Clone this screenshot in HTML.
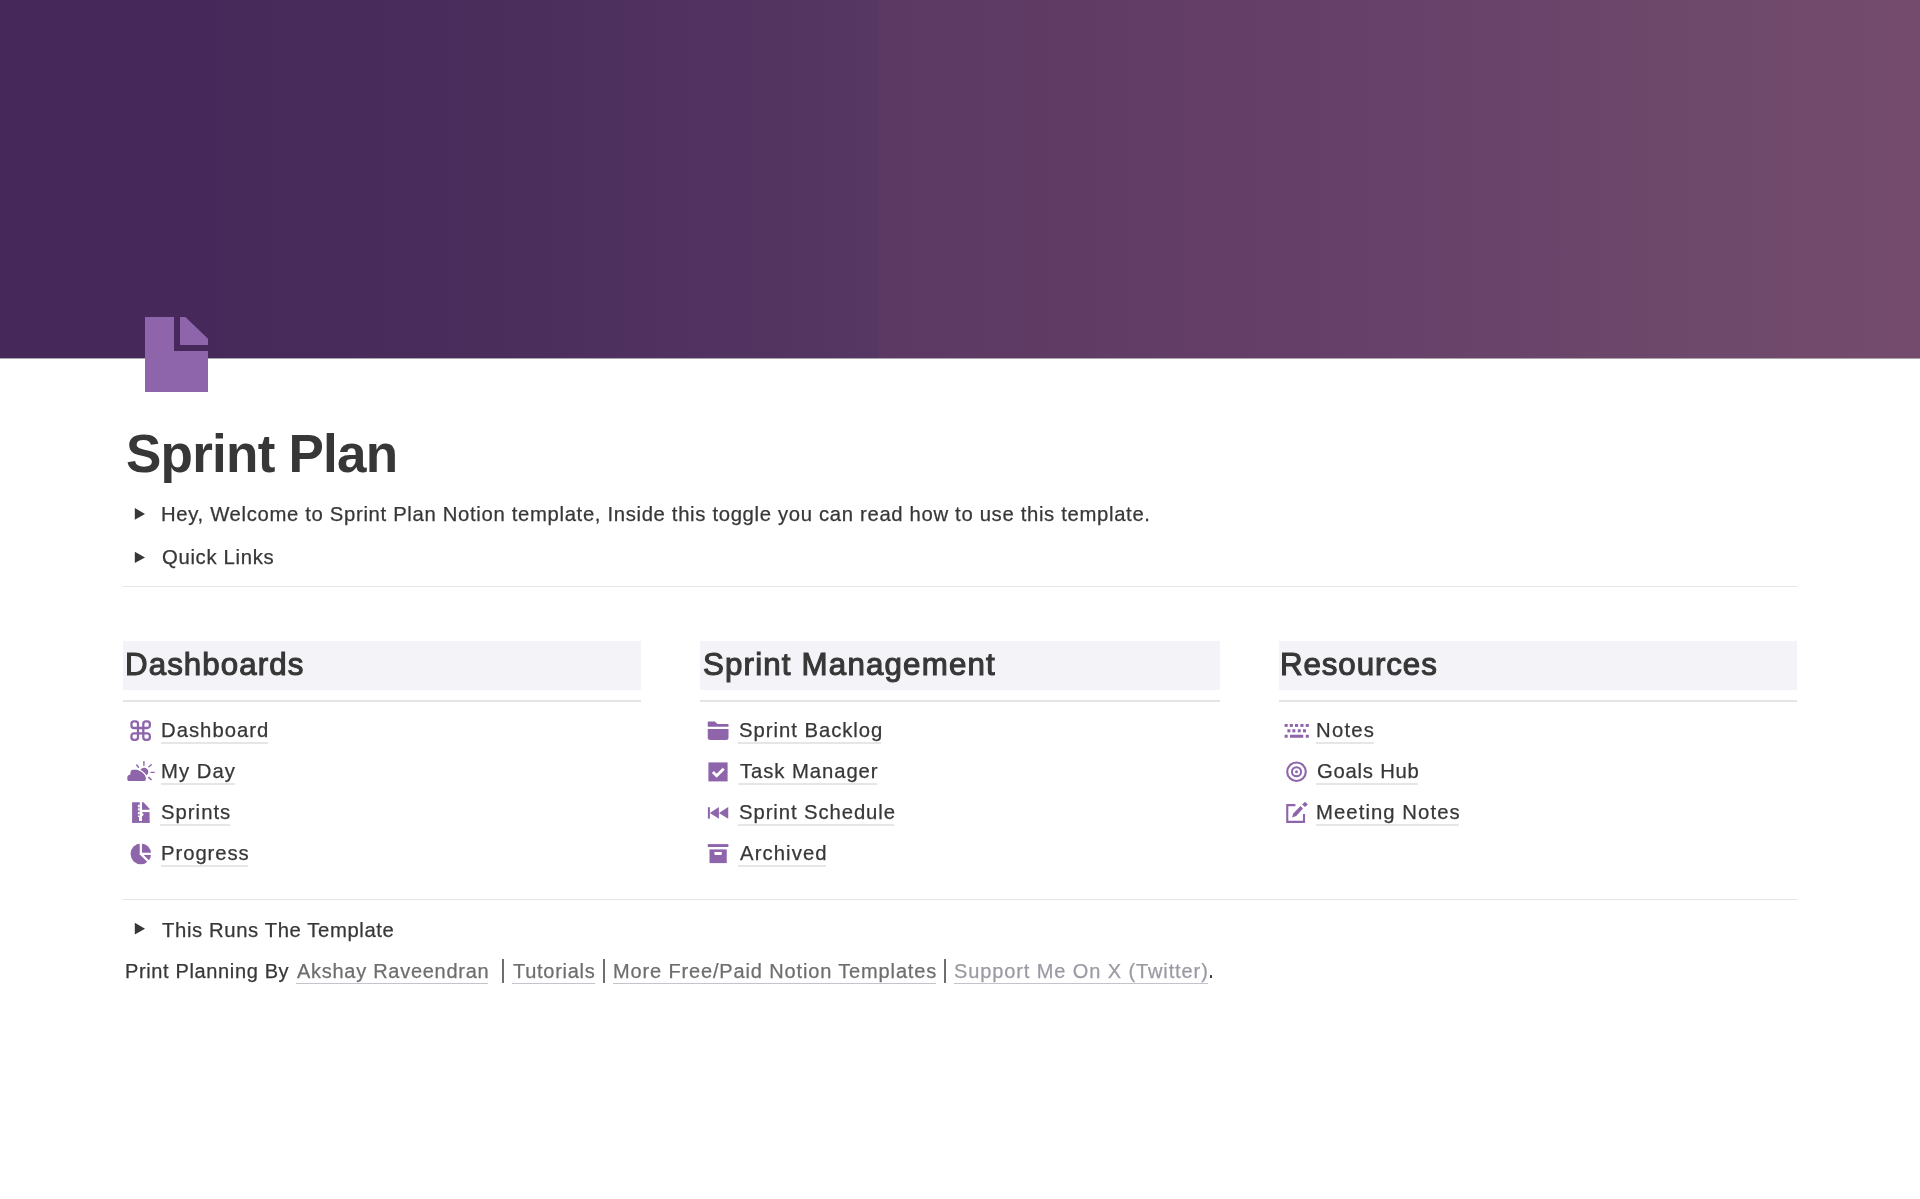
<!DOCTYPE html>
<html><head><meta charset="utf-8"><title>Sprint Plan</title>
<style>
html,body{margin:0;padding:0;background:#fff;}
body{width:1920px;height:1199px;overflow:hidden;position:relative;font-family:"Liberation Sans",sans-serif;}
.t{position:absolute;white-space:pre;line-height:1;will-change:transform;}
.u{position:absolute;}
.banner{position:absolute;left:0;top:0;width:1920px;height:358px;background:linear-gradient(90deg,#46295A 0px,#46295A 190px,#492B5B 354px,#4C2E5D 537px,#513260 704px,#563662 876px,#5B3962 880px,#623D66 1150px,#663F69 1290px,#69436A 1500px,#6E496B 1700px,#744B6D 1920px);}
.hbox{position:absolute;top:641px;height:49px;background:#F4F3F8;}
.div{position:absolute;height:1px;background:#E4E4E4;}
</style></head><body>
<div class="banner"></div>
<div class="u" style="left:0;top:358px;width:1920px;height:1px;background:#A9A6AB"></div>
<div class="div" style="left:123px;top:586px;width:1674px;background:#E6E6E6"></div>
<div class="hbox" style="left:123px;width:518px"></div>
<div class="hbox" style="left:700px;width:520px"></div>
<div class="hbox" style="left:1279px;width:518px"></div>
<div class="div" style="left:123px;top:700px;width:518px;height:1.6px"></div>
<div class="div" style="left:700px;top:700px;width:520px;height:1.6px"></div>
<div class="div" style="left:1279px;top:700px;width:518px;height:1.6px"></div>
<div class="div" style="left:123px;top:898.5px;width:1674px;background:#E6E6E6"></div>
<div class="t" style="left:125.91px;top:427.07px;font-size:53.04px;letter-spacing:-0.780px;font-weight:bold;color:#373737;">Sprint Plan</div><div class="t" style="left:161.28px;top:503.71px;font-size:20.29px;letter-spacing:0.669px;color:#373737;-webkit-text-stroke:0.25px #373737;">Hey, Welcome to Sprint Plan Notion template, Inside this toggle you can read how to use this template.</div><div class="t" style="left:161.69px;top:546.56px;font-size:20.29px;letter-spacing:0.683px;color:#373737;-webkit-text-stroke:0.25px #373737;">Quick Links</div><div class="t" style="left:125.40px;top:649.29px;font-size:31.30px;letter-spacing:1.068px;color:#373737;-webkit-text-stroke:1.1px #373737;">Dashboards</div><div class="t" style="left:703.03px;top:649.29px;font-size:31.30px;letter-spacing:1.162px;color:#373737;-webkit-text-stroke:1.1px #373737;">Sprint Management</div><div class="t" style="left:1280.40px;top:649.29px;font-size:31.30px;letter-spacing:0.903px;color:#373737;-webkit-text-stroke:1.1px #373737;">Resources</div><div class="t" style="left:160.88px;top:719.81px;font-size:20.29px;letter-spacing:1.015px;color:#373737;-webkit-text-stroke:0.25px #373737;">Dashboard</div><div class="u" style="left:161.00px;top:742.00px;width:107.00px;height:2px;background:#E6E6E6"></div><div class="t" style="left:160.88px;top:760.81px;font-size:20.29px;letter-spacing:1.028px;color:#373737;-webkit-text-stroke:0.25px #373737;">My Day</div><div class="u" style="left:161.00px;top:783.00px;width:74.00px;height:2px;background:#E6E6E6"></div><div class="t" style="left:160.99px;top:801.81px;font-size:20.29px;letter-spacing:1.020px;color:#373737;-webkit-text-stroke:0.25px #373737;">Sprints</div><div class="u" style="left:160.00px;top:824.00px;width:70.00px;height:2px;background:#E6E6E6"></div><div class="t" style="left:160.88px;top:842.81px;font-size:20.29px;letter-spacing:0.939px;color:#373737;-webkit-text-stroke:0.25px #373737;">Progress</div><div class="u" style="left:161.00px;top:865.00px;width:87.00px;height:2px;background:#E6E6E6"></div><div class="t" style="left:738.59px;top:719.81px;font-size:20.29px;letter-spacing:0.967px;color:#373737;-webkit-text-stroke:0.25px #373737;">Sprint Backlog</div><div class="u" style="left:738.00px;top:742.00px;width:143.00px;height:2px;background:#E6E6E6"></div><div class="t" style="left:739.59px;top:760.81px;font-size:20.29px;letter-spacing:0.926px;color:#373737;-webkit-text-stroke:0.25px #373737;">Task Manager</div><div class="u" style="left:738.00px;top:783.00px;width:139.00px;height:2px;background:#E6E6E6"></div><div class="t" style="left:738.59px;top:801.81px;font-size:20.29px;letter-spacing:0.913px;color:#373737;-webkit-text-stroke:0.25px #373737;">Sprint Schedule</div><div class="u" style="left:738.00px;top:824.00px;width:156.00px;height:2px;background:#E6E6E6"></div><div class="t" style="left:740.00px;top:842.81px;font-size:20.29px;letter-spacing:1.099px;color:#373737;-webkit-text-stroke:0.25px #373737;">Archived</div><div class="u" style="left:738.00px;top:865.00px;width:88.00px;height:2px;background:#E6E6E6"></div><div class="t" style="left:1315.98px;top:719.81px;font-size:20.29px;letter-spacing:1.244px;color:#373737;-webkit-text-stroke:0.25px #373737;">Notes</div><div class="u" style="left:1316.00px;top:742.00px;width:58.00px;height:2px;background:#E6E6E6"></div><div class="t" style="left:1316.59px;top:760.81px;font-size:20.29px;letter-spacing:0.757px;color:#373737;-webkit-text-stroke:0.25px #373737;">Goals Hub</div><div class="u" style="left:1316.00px;top:783.00px;width:102.00px;height:2px;background:#E6E6E6"></div><div class="t" style="left:1315.98px;top:801.81px;font-size:20.29px;letter-spacing:1.072px;color:#373737;-webkit-text-stroke:0.25px #373737;">Meeting Notes</div><div class="u" style="left:1316.00px;top:824.00px;width:143.00px;height:2px;background:#E6E6E6"></div><div class="t" style="left:161.89px;top:919.81px;font-size:20.29px;letter-spacing:0.609px;color:#373737;-webkit-text-stroke:0.25px #373737;">This Runs The Template</div><div class="t" style="left:125.30px;top:960.76px;font-size:20.00px;letter-spacing:0.637px;color:#373737;-webkit-text-stroke:0.25px #373737;">Print Planning By</div><div class="t" style="left:296.90px;top:960.76px;font-size:20.00px;letter-spacing:0.719px;color:#6E6E6E;-webkit-text-stroke:0.25px #6E6E6E;">Akshay Raveendran</div><div class="u" style="left:296.00px;top:983.00px;width:192.00px;height:1px;background:#C5C4CC"></div><div class="t" style="left:513.00px;top:960.76px;font-size:20.00px;letter-spacing:0.725px;color:#6E6E6E;-webkit-text-stroke:0.25px #6E6E6E;">Tutorials</div><div class="u" style="left:512.00px;top:983.00px;width:83.00px;height:1px;background:#C5C4CC"></div><div class="t" style="left:612.70px;top:960.76px;font-size:20.00px;letter-spacing:0.857px;color:#6E6E6E;-webkit-text-stroke:0.25px #6E6E6E;">More Free/Paid Notion Templates</div><div class="u" style="left:613.00px;top:983.00px;width:323.00px;height:1px;background:#C5C4CC"></div><div class="t" style="left:954.30px;top:960.76px;font-size:20.00px;letter-spacing:0.896px;color:#9A9AA3;-webkit-text-stroke:0.25px #9A9AA3;">Support Me On X (Twitter)</div><div class="u" style="left:954.00px;top:983.00px;width:254.00px;height:1px;background:#C5C4CC"></div><div class="u" style="left:501.8px;top:959px;width:1.8px;height:23.8px;background:#6E6E6E"></div><div class="u" style="left:602.8px;top:959px;width:1.8px;height:23.8px;background:#6E6E6E"></div><div class="u" style="left:944.0px;top:959px;width:1.8px;height:23.8px;background:#6E6E6E"></div><div class="u" style="left:1209.6px;top:974.6px;width:2.9px;height:3.1px;background:#373737;border-radius:0.5px"></div>
<svg style="position:absolute;left:0;top:0" width="1920" height="1199" viewBox="0 0 1920 1199">
<g fill="#8E65AB">
<path d="M145,317H174V351H208V392H145Z"/>
<path d="M180,317H185.4L208,338.75V345H180Z"/>
</g>
<g fill="#373737">
<path d="M134.8,508L145,513.9L134.8,519.7Z"/>
<path d="M134.8,551.7L145,557.4L134.8,563.1Z"/>
<path d="M134.8,922.8L145,928.7L134.8,934.6Z"/>
</g>
<path fill="none" stroke="#8E65AB" stroke-width="2.3" d="M138.0,728.0H134.04999999999998A2.6,2.6 0 0 1 131.45,725.4V724.0500000000001A2.6,2.6 0 0 1 134.04999999999998,721.45H135.4A2.6,2.6 0 0 1 138.0,724.0500000000001V737.25A2.6,2.6 0 0 1 135.4,739.85H134.04999999999998A2.6,2.6 0 0 1 131.45,737.25V735.9A2.6,2.6 0 0 1 134.04999999999998,733.3H147.25A2.6,2.6 0 0 1 149.85,735.9V737.25A2.6,2.6 0 0 1 147.25,739.85H145.9A2.6,2.6 0 0 1 143.3,737.25V724.0500000000001A2.6,2.6 0 0 1 145.9,721.45H147.25A2.6,2.6 0 0 1 149.85,724.0500000000001V725.4A2.6,2.6 0 0 1 147.25,728.0Z"/>
<g>
<circle cx="144.1" cy="771.9" r="4.2" fill="#8E65AB"/>
<path fill="#8E65AB" stroke="#fff" stroke-width="2.6" paint-order="stroke" d="M128.7,781H144.2Q145.9,781 145.9,779.2V778Q145.6,775.2 143.4,773.6Q141.5,771.6 139.2,770.8Q138.2,769.8 136.5,769.8H133Q131,769.8 130.6,771.8L130.3,774.6Q127.3,775.2 127.3,777.6V779.3Q127.3,781 128.7,781Z"/>
<g stroke="#8E65AB" stroke-width="1.4" stroke-linecap="round">
<path d="M143.9,761.6V765.3"/>
<path d="M136.7,765L138.5,767.3"/>
<path d="M148.9,766.8L151.3,764.8"/>
<path d="M151.1,772.4H154.2"/>
<path d="M148.7,777.4L151.2,779.6"/>
</g>
</g>
<g fill="#8E65AB">
<rect x="132.1" y="802.25" width="7.65" height="20.5"/>
<path d="M142,802.25H143.5L149.6,808.75V809.75H142Z"/>
<rect x="142" y="812.1" width="7.6" height="10.65"/>
<rect x="132.1" y="821" width="17.5" height="1.75"/>
</g>
<g fill="#fff">
<rect x="137.9" y="804.8" width="1.9" height="2.5"/>
<rect x="137.9" y="808.3" width="1.9" height="2.3"/>
<rect x="137.9" y="812" width="1.9" height="2.2"/>
<rect x="137.9" y="815.5" width="1.9" height="1.5"/>
<path d="M142,812.6L143.8,814.5L142,816.4Z"/>
<rect x="139" y="816.5" width="3" height="4.5"/>
</g>
<g>
<circle cx="140.85" cy="853.85" r="10.3" fill="#8E65AB"/>
<g stroke="#fff" stroke-width="2.25">
<path d="M140.85,842V855"/>
<path d="M139.9,853.85H152"/>
<path d="M140.85,853.85L149.8,862.8"/>
</g>
</g>
<g fill="#8E65AB">
<path d="M708.5,721.4H714.75L717.5,724H727.9Q728.5,724 728.5,724.6V726.75H707.75V722.1Q707.75,721.4 708.5,721.4Z"/>
<path d="M707.75,729H728.5V737.5Q728.5,740 726,740H710.25Q707.75,740 707.75,737.5Z"/>
<rect x="708.4" y="762.4" width="19.2" height="19"/>
<rect x="707.9" y="807.25" width="2" height="11.35"/>
<path d="M709.9,812.9L718.9,807.1V818.75Z"/>
<path d="M718.9,812.9L728.25,807.1V818.75Z"/>
<rect x="707.75" y="844.1" width="20.65" height="2.9"/>
<rect x="709.5" y="849.4" width="17.25" height="13.7"/>
</g>
<path d="M712.9,772L716.6,775.8L723.75,768.75" fill="none" stroke="#fff" stroke-width="2.8"/>
<path fill="#fff" d="M714.4,852.1H721.75V854Q721.75,855 720.75,855H715.4Q714.4,855 714.4,854Z"/>
<g fill="#8E65AB">
<rect x="1284.6" y="724" width="3.1" height="2.9"/>
<rect x="1289.75" y="724" width="3.1" height="2.9"/>
<rect x="1295" y="724" width="3.1" height="2.9"/>
<rect x="1300.4" y="724" width="3.1" height="2.9"/>
<rect x="1305.75" y="724" width="3.1" height="2.9"/>
<rect x="1287.4" y="729.25" width="2.95" height="3.1"/>
<rect x="1292.4" y="729.25" width="2.95" height="3.1"/>
<rect x="1297.75" y="729.25" width="2.95" height="3.1"/>
<rect x="1303" y="729.25" width="2.95" height="3.1"/>
<rect x="1284.6" y="734.75" width="3.1" height="3"/>
<rect x="1290" y="734.75" width="13.25" height="3"/>
<rect x="1305.75" y="734.75" width="3.1" height="3"/>
</g>
<g fill="none" stroke="#8E65AB">
<circle cx="1296.5" cy="771.75" r="9.3" stroke-width="2.1"/>
<circle cx="1296.5" cy="771.75" r="4.56" stroke-width="2"/>
</g>
<circle cx="1296.5" cy="771.75" r="1.5" fill="#8E65AB"/>
<path d="M1295.4,805.1H1287.25V821.9H1304V813.9" fill="none" stroke="#8E65AB" stroke-width="2.1"/>
<g fill="#8E65AB">
<path d="M1292.1,817.4L1293.25,813.4L1300.5,806.1L1303,808.5L1296.25,816Z"/>
<path d="M1302.1,804.4L1305,801.75L1307.9,804.4L1305,807.05Z"/>
</g>
</svg>

</body></html>
